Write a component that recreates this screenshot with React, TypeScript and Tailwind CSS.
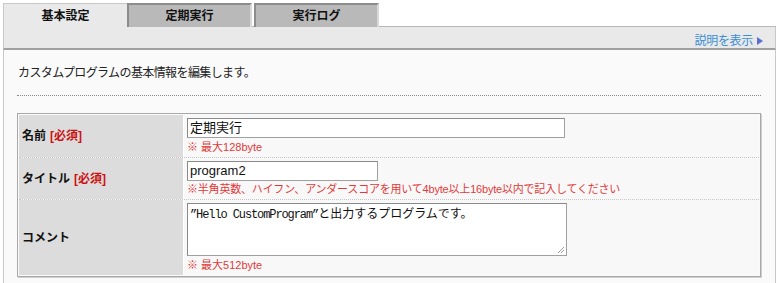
export default function App() {
  return (
    <div
      className="w-[780px] h-[283px] overflow-hidden bg-white pt-[3px] pl-[3px] text-[#222]"
      style={{ fontFamily: '"Liberation Sans", "Noto Sans CJK JP", sans-serif' }}
    >
      <div className="w-[773px]">
        {/* tabs */}
        <div className="flex h-[24px]">
          <div className="w-[124px] h-[24px] bg-[#e9e9e9] border-l border-t border-[#c8c8c8] flex items-center justify-center text-[12px] font-bold text-[#111]">
            基本設定
          </div>
          <div className="flex-1 flex border-b border-[#b8b8b8]">
            <div className="w-[125px] h-[24px] bg-[#b9b9b9] border-2 border-b-0 border-t-[#8c8c8c] border-l-[#8c8c8c] border-r-[#d8d8d8] flex items-center justify-center text-[12px] font-bold text-[#111]">
              定期実行
            </div>
            <div className="w-[2px]" />
            <div className="w-[125px] h-[24px] bg-[#b9b9b9] border-2 border-b-0 border-t-[#8c8c8c] border-l-[#8c8c8c] border-r-[#d8d8d8] flex items-center justify-center text-[12px] font-bold text-[#111]">
              実行ログ
            </div>
            <div className="flex-1" />
          </div>
        </div>

        {/* band */}
        <div className="h-[23px] bg-[#e9e9e9] border-l border-r border-[#c8c8c8] border-b-2 border-b-[#a0a0a0] flex items-end justify-end pr-[12px]">
          <span className="text-[12px] leading-[14px] text-[#3a8ed4] tracking-[-0.3px]">説明を表示</span>
          <span className="ml-[4px] mb-[3px] w-0 h-0 border-y-[4px] border-y-transparent border-l-[6px] border-l-[#5a6fd0]" />
        </div>

        {/* content */}
        <div className="h-[240px] bg-[#fafafa] border-l border-r border-[#c8c8c8] pl-[13px] pr-[14px]">
          <p className="pt-[16px] text-[12px] leading-[14px] tracking-[-0.6px] pl-[1px] text-[#222]">
            カスタムプログラムの基本情報を編集します。
          </p>
          <div className="mt-[15px] border-t border-dotted border-[#8a8a8a]" />

          <div className="mt-[17px] border border-[#a8a8a8] p-[1px] shadow-[1px_1px_0_#d0d0d0]">
            {/* row 1 */}
            <div className="grid grid-cols-[165px_1fr] border-b border-dotted border-[#c4c4c4]">
              <div className="h-[42px] bg-[#dcdcdc] border-r border-white flex items-center pl-[3px] text-[12px] font-bold text-[#111]">
                名前<span className="ml-[4px] text-[#cc1111]">[必須]</span>
              </div>
              <div className="h-[42px] bg-[#f8f8f8] pl-[3px] pt-[3px]">
                <div className="w-[378px] h-[20px] bg-white border border-[#a0a0a0] border-t-[#8a8a8a] border-l-[#8a8a8a] flex items-center px-[2px] text-[13px] text-[#111]">
                  定期実行
                </div>
                <div className="mt-[2px] text-[11px] leading-[14px] text-[#e23a3a]">※ 最大128byte</div>
              </div>
            </div>
            {/* row 2 */}
            <div className="grid grid-cols-[165px_1fr] border-b border-dotted border-[#c4c4c4]">
              <div className="h-[41px] bg-[#dcdcdc] border-r border-white flex items-center pl-[3px] text-[12px] font-bold text-[#111]">
                タイトル<span className="ml-[4px] text-[#cc1111]">[必須]</span>
              </div>
              <div className="h-[41px] bg-[#f8f8f8] pl-[3px] pt-[3px]">
                <div className="w-[191px] h-[20px] bg-white border border-[#a0a0a0] border-t-[#8a8a8a] border-l-[#8a8a8a] flex items-center px-[2px] text-[13px] text-[#111]">
                  program2
                </div>
                <div className="mt-[1px] text-[11px] leading-[14px] text-[#e23a3a] tracking-[-0.2px]">
                  ※半角英数、ハイフン、アンダースコアを用いて4byte以上16byte以内で記入してください
                </div>
              </div>
            </div>
            {/* row 3 */}
            <div className="grid grid-cols-[165px_1fr]">
              <div className="h-[75px] bg-[#dcdcdc] border-r border-white flex items-center pl-[3px] text-[12px] font-bold text-[#111]">
                コメント
              </div>
              <div className="h-[75px] bg-[#f8f8f8] pl-[3px] pt-[3px]">
                <div className="relative w-[380px] h-[53px] bg-white border border-[#a0a0a0] border-t-[#8a8a8a] border-l-[#8a8a8a] px-[2px] pt-[2px] text-[12px] leading-[16px] text-[#111]">
                  <span
                    className="tracking-[-1.1px]"
                    style={{ fontFamily: '"Liberation Mono", "Noto Sans CJK JP", monospace' }}
                  >
                    ”Hello CustomProgram”
                  </span>
                  <span>と出力するプログラムです。</span>
                  <svg className="absolute right-[1px] bottom-[1px]" width="8" height="8" viewBox="0 0 8 8">
                    <path d="M7 1L1 7M7 4L4 7" stroke="#999" strokeWidth="1" />
                  </svg>
                </div>
                <div className="mt-[2px] text-[11px] leading-[14px] text-[#e23a3a]">※ 最大512byte</div>
              </div>
            </div>
          </div>
        </div>
      </div>
    </div>
  )
}
